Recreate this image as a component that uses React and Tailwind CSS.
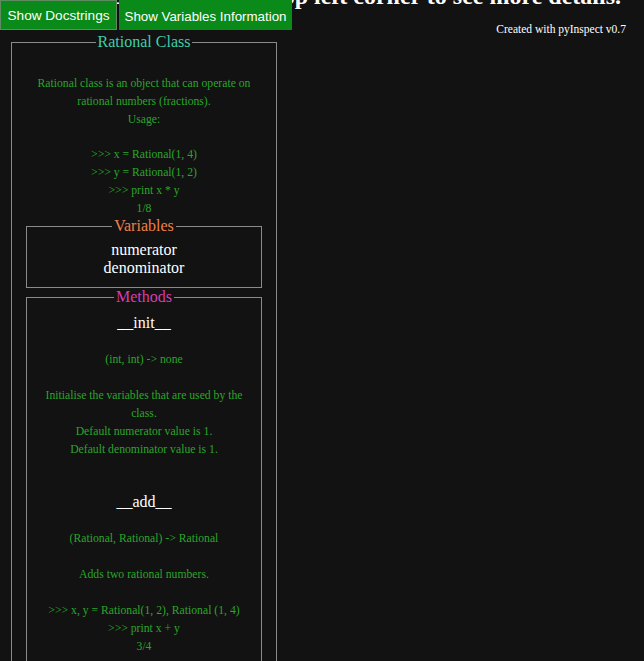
import React from "react";

const green = "text-[#2ba52b]";

function Method({ name, sig, doc, first }) {
  return (
    <div className={first ? "" : "mt-[34px]"}>
      <div className="text-white text-[16px] leading-[18px]">{name}</div>
      <div className={`mt-[19px] text-[11.7px] leading-[18px] ${green}`}>{sig}</div>
      <div className={`mt-[18px] text-[11.7px] leading-[18px] whitespace-pre-line ${green}`}>{doc}</div>
    </div>
  );
}

export default function App() {
  return (
    <div className="relative min-h-[661px] overflow-hidden bg-[#121212] font-['Liberation_Serif','Times_New_Roman',serif]">
      <h1 className="-mt-[16px] flex justify-end whitespace-nowrap pr-[23px] text-[24px] font-bold leading-[24px] text-white">
        <span className="shrink-0">Click on the buttons in the top left corner to see more details.</span>
      </h1>

      <div className="mt-[2px] flex items-start justify-between">
        <fieldset className="ml-[11px] mt-[23px] w-[266px] min-w-0 border border-[#8a8a8a] px-[14px] pb-[20px] text-center">
          <legend className="mx-auto px-[2px] text-[16px] leading-[18px] text-[#3fcfa8]">Rational Class</legend>
          <div className={`mt-[24px] whitespace-pre-line text-[11.7px] leading-[17.8px] ${green}`}>
            {"Rational class is an object that can operate on rational numbers (fractions).\nUsage:\n\n>>> x = Rational(1, 4)\n>>> y = Rational(1, 2)\n>>> print x * y\n1/8"}
          </div>

          <fieldset className="min-w-0 border border-[#8a8a8a] pb-[10px] pt-[6px] text-center">
            <legend className="mx-auto px-[2px] text-[16px] leading-[18px] text-[#f08048]">Variables</legend>
            <div className="text-[16px] leading-[18px] text-white">numerator</div>
            <div className="text-[16px] leading-[18px] text-white">denominator</div>
          </fieldset>

          <fieldset className="min-w-0 border border-[#8a8a8a] px-[14px] pb-[20px] pt-[8px] text-center">
            <legend className="mx-auto px-[2px] text-[16px] leading-[18px] text-[#d63cb0]">Methods</legend>
            <Method
              first
              name="__init__"
              sig="(int, int) -> none"
              doc={"Initialise the variables that are used by the class.\nDefault numerator value is 1.\nDefault denominator value is 1."}
            />
            <Method
              name="__add__"
              sig="(Rational, Rational) -> Rational"
              doc={"Adds two rational numbers.\n\n>>> x, y = Rational(1, 2), Rational (1, 4)\n>>> print x + y\n3/4"}
            />
            <Method
              name="__sub__"
              sig="(Rational, Rational) -> Rational"
              doc={"Subtracts two rational numbers."}
            />
          </fieldset>
        </fieldset>

        <div className="mr-[18px] mt-[13px] text-[11.5px] leading-[13px] text-white">Created with pyInspect v0.7</div>
      </div>

      <div className="absolute left-0 top-0 flex gap-[2px] font-['Liberation_Sans',Arial,sans-serif]">
        <button className="h-[30px] w-[117px] border border-[#5f8a62] bg-[#0a8a18] pt-[3px] text-[13.6px] text-white">
          Show Docstrings
        </button>
        <button className="h-[30px] w-[173px] border border-[#0a8a18] bg-[#0a8a18] pt-[3px] text-[13.33px] text-white">
          Show Variables Information
        </button>
      </div>
    </div>
  );
}
